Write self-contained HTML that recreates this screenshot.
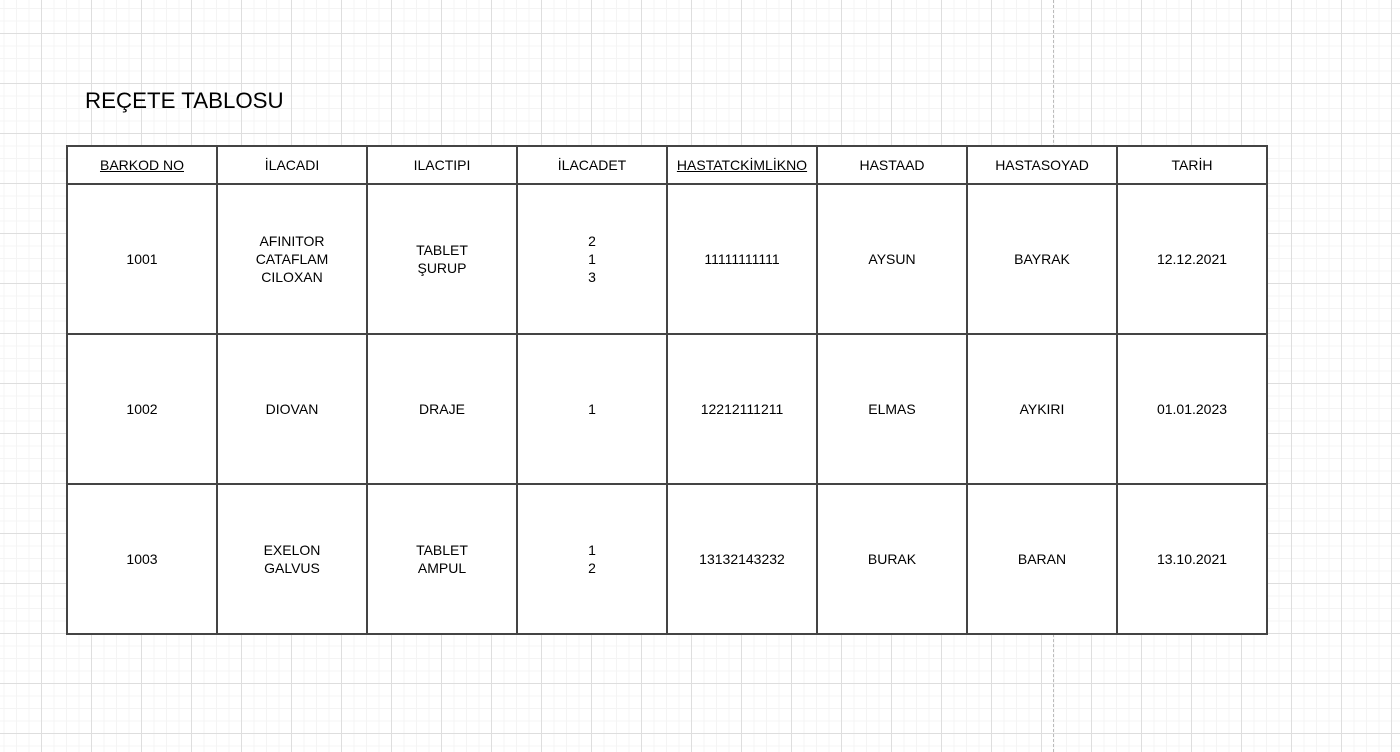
<!DOCTYPE html>
<html><head><meta charset="utf-8"><style>
html,body{margin:0;padding:0}
body{width:1400px;height:752px;position:relative;overflow:hidden;font-family:"Liberation Sans",Arial,sans-serif;color:#000;
background-color:#fff;
background-image:
linear-gradient(to right,#dedede 1px,transparent 1px),
linear-gradient(to bottom,#dedede 1px,transparent 1px),
linear-gradient(to right,#f4f4f4 1px,transparent 1px),
linear-gradient(to bottom,#f4f4f4 1px,transparent 1px);
background-size:50px 50px,50px 50px,12.5px 12.5px,12.5px 12.5px;
background-position:41px 0,0 33px,41px 0,0 33px;}
.dash{position:absolute;left:1053px;top:0;height:752px;border-left:1px dashed #bbb}
.title{position:absolute;left:85px;top:88px;font-size:22.3px}
table{position:absolute;left:66px;top:145px;border-collapse:collapse;background:#fff;table-layout:fixed}
td{border:2px solid #444;width:148px;text-align:center;font-size:14px;line-height:18px;padding:0}
tr.h td{height:36px}
tr.r td{height:148px}
u{text-decoration:underline}
</style></head><body>
<div class="dash"></div>
<div class="title">REÇETE TABLOSU</div>
<table>
<tr class="h"><td><u>BARKOD NO</u></td><td>İLACADI</td><td>ILACTIPI</td><td>İLACADET</td><td><u>HASTATCKİMLİKNO</u></td><td>HASTAAD</td><td>HASTASOYAD</td><td>TARİH</td></tr>
<tr class="r"><td>1001</td><td>AFINITOR<br>CATAFLAM<br>CILOXAN</td><td>TABLET<br>ŞURUP</td><td>2<br>1<br>3</td><td>11111111111</td><td>AYSUN</td><td>BAYRAK</td><td>12.12.2021</td></tr>
<tr class="r"><td>1002</td><td>DIOVAN</td><td>DRAJE</td><td>1</td><td>12212111211</td><td>ELMAS</td><td>AYKIRI</td><td>01.01.2023</td></tr>
<tr class="r"><td>1003</td><td>EXELON<br>GALVUS</td><td>TABLET<br>AMPUL</td><td>1<br>2</td><td>13132143232</td><td>BURAK</td><td>BARAN</td><td>13.10.2021</td></tr>
</table>
</body></html>
